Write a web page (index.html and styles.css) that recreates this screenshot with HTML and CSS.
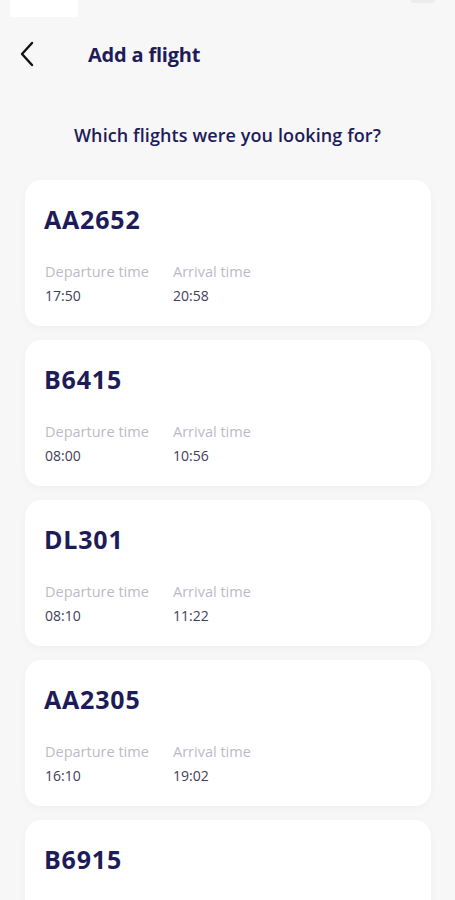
FILE: index.html
```html
<!DOCTYPE html>
<html lang="en">
<head>
    <meta charset="UTF-8">
    <title>Add a flight</title>
    <link rel="stylesheet" href="styles.css">
</head>
<body>
    <div class="status_bar">
        <div class="status_left"></div>
        <div class="status_right"></div>
    </div>
    <div class="header">
        <a class="back" href="#">
            <svg width="16" height="26" viewBox="0 0 16 26">
                <polyline points="13,2 3,13 13,24" fill="none" stroke="#111" stroke-width="2.4" stroke-linecap="round" stroke-linejoin="round"/>
            </svg>
        </a>
        <h1>Add a flight</h1>
    </div>
    <p class="question">Which flights were you looking for?</p>
    <div class="flight_list">
        <div class="flight_card">
            <h2>AA2652</h2>
            <div class="times">
                <div class="time_col">
                    <span class="label">Departure time</span>
                    <span class="value">17:50</span>
                </div>
                <div class="time_col">
                    <span class="label">Arrival time</span>
                    <span class="value">20:58</span>
                </div>
            </div>
        </div>
        <div class="flight_card">
            <h2>B6415</h2>
            <div class="times">
                <div class="time_col">
                    <span class="label">Departure time</span>
                    <span class="value">08:00</span>
                </div>
                <div class="time_col">
                    <span class="label">Arrival time</span>
                    <span class="value">10:56</span>
                </div>
            </div>
        </div>
        <div class="flight_card">
            <h2>DL301</h2>
            <div class="times">
                <div class="time_col">
                    <span class="label">Departure time</span>
                    <span class="value">08:10</span>
                </div>
                <div class="time_col">
                    <span class="label">Arrival time</span>
                    <span class="value">11:22</span>
                </div>
            </div>
        </div>
        <div class="flight_card">
            <h2>AA2305</h2>
            <div class="times">
                <div class="time_col">
                    <span class="label">Departure time</span>
                    <span class="value">16:10</span>
                </div>
                <div class="time_col">
                    <span class="label">Arrival time</span>
                    <span class="value">19:02</span>
                </div>
            </div>
        </div>
        <div class="flight_card">
            <h2>B6915</h2>
        </div>
    </div>
</body>
</html>
```

FILE: styles.css
```css
html, body{
    margin: 0;
    padding: 0;
}
body{
    width: 455px;
    height: 900px;
    overflow: hidden;
    background-color: #f7f7f8;
    font-family: "Open Sans", "Liberation Sans", sans-serif;
    color: #1e1c58;
}
.status_bar{
    height: 17px;
    display: flex;
    justify-content: space-between;
}
.status_left{
    width: 68px;
    height: 17px;
    margin-left: 10px;
    background-color: #fff;
}
.status_right{
    width: 24px;
    height: 3px;
    margin-right: 20px;
    background-color: #ececec;
    border-radius: 0 0 4px 4px;
}
.header{
    height: 40px;
    margin-top: 17px;
    display: flex;
    align-items: center;
}
.back{
    display: block;
    width: 16px;
    height: 26px;
    margin-left: 19px;
}
.header h1{
    margin: 0 0 0 53px;
    font-size: 20px;
    font-weight: 700;
    letter-spacing: -0.2px;
}
.question{
    margin: 49px 0 0;
    text-align: center;
    font-size: 18px;
    font-weight: 600;
    line-height: 24px;
    letter-spacing: 0.1px;
}
.flight_list{
    margin: 33px 24px 0 25px;
    display: flex;
    flex-direction: column;
    gap: 14px;
}
.flight_card{
    height: 146px;
    box-sizing: border-box;
    padding: 22px 20px 0;
    background-color: #fff;
    border-radius: 16px;
    box-shadow: 0 2px 8px rgba(0,0,0,0.04);
}
.flight_card h2{
    margin: 0 0 0 -1px;
    font-size: 25px;
    font-weight: 700;
    line-height: 34px;
    letter-spacing: 0.8px;
}
.times{
    margin-top: 26px;
    display: flex;
}
.time_col{
    display: flex;
    flex-direction: column;
    width: 128px;
}
.label{
    font-size: 14.5px;
    line-height: 20px;
    color: #bbbac8;
    letter-spacing: 0;
}
.value{
    margin-top: 4px;
    font-size: 14px;
    line-height: 20px;
    color: #3e3d5c;
}
```
